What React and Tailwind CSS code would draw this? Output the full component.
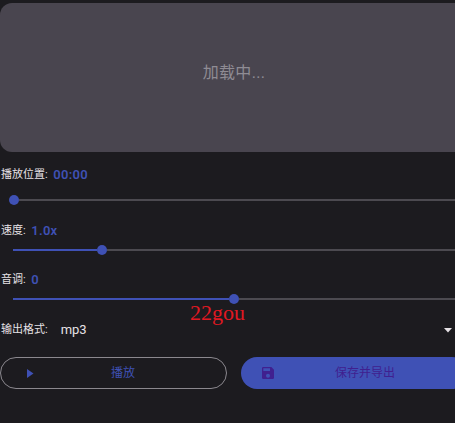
const font = { fontFamily: 'Roboto, "Noto Sans CJK SC", sans-serif' };

function Slider({ done }) {
  return (
    <div className="flex items-center h-[10px] ml-[13px] w-[442px]">
      {done > 0 && <div className="h-[2px] bg-[#3f51b5]" style={{ width: done - 5 }} />}
      <div className={`w-[10px] h-[10px] rounded-full bg-[#3f51b5] shrink-0 ${done === 0 ? '-ml-[4px]' : ''}`} />
      <div className="h-[2px] flex-1 bg-[#4c4a50]" />
    </div>
  );
}

function Label({ name, value }) {
  return (
    <div className="flex items-center h-[18px] text-[11px] text-[#e6e1e5] pl-px">
      <span>{name}:</span>
      <span className="ml-[5.5px] text-[13px] font-semibold text-[#3f51b5] tracking-[0.3px]">{value}</span>
    </div>
  );
}

export default function App() {
  return (
    <div className="relative w-[455px] h-[423px] overflow-hidden bg-[#1c1b1f]" style={font}>
      <div className="w-[468px] pt-[3px]">
        {/* Preview */}
        <div className="h-[149px] pb-[10px] rounded-[12px] bg-[#49454f] flex items-center justify-center text-[16px] tracking-[0.3px] text-[#8f8c94]">
          加载中...
        </div>

        <div className="mt-[14px]">
          <Label name="播放位置" value="00:00" />
        </div>
        <div className="mt-[11px]">
          <Slider done={0} />
        </div>

        <div className="mt-[17px]">
          <Label name="速度" value="1.0x" />
        </div>
        <div className="mt-[5px]">
          <Slider done={89} />
        </div>

        <div className="mt-[16px]">
          <Label name="音调" value="0" />
        </div>
        <div className="mt-[5px]">
          <Slider done={221} />
        </div>

        {/* Output format */}
        <div className="mt-[17px] flex items-center h-[18px] text-[11px] text-[#e6e1e5] pl-px w-[455px]">
          <span>输出格式:</span>
          <span className="ml-[13px] text-[13px]">mp3</span>
          <svg className="ml-auto mr-[3px]" width="8" height="5" viewBox="0 0 8 5">
            <path d="M0 0h8L4 4.5z" fill="#e6e1e5" />
          </svg>
        </div>

        {/* Buttons */}
        <div className="mt-[18px] flex gap-[14px]">
          <button className="w-[227px] h-[32px] rounded-full border border-[#8b888e] flex items-center pl-[20px] pr-[19px] text-[12px] text-[#3f51b5]">
            <span className="w-[18px] flex justify-center">
              <svg width="8" height="9" viewBox="0 0 8 9">
                <path d="M1 0l6.5 4.5L1 9z" fill="#3f51b5" />
              </svg>
            </span>
            <span className="flex-1 text-center">播放</span>
          </button>
          <button className="w-[227px] h-[32px] rounded-full bg-[#3f51b5] flex items-center pl-[21px] pr-[12px] text-[12px] text-[#40208f]">
            <span className="w-[12px] flex justify-center">
              <svg width="12" height="12" viewBox="3 3 18 18">
                <path
                  d="M17 3H5a2 2 0 0 0-2 2v14a2 2 0 0 0 2 2h14a2 2 0 0 0 2-2V7l-4-4zm-5 16a3 3 0 1 1 0-6 3 3 0 0 1 0 6zm3-10H5V5h10v4z"
                  fill="#40208f"
                />
              </svg>
            </span>
            <span className="flex-1 text-center">保存并导出</span>
          </button>
        </div>
      </div>

      {/* Watermark */}
      <div className="absolute left-[190px] top-[300px] text-[22px] leading-[26px] text-[#e01822] font-['Liberation_Serif',serif]">
        22gou
      </div>
    </div>
  );
}
